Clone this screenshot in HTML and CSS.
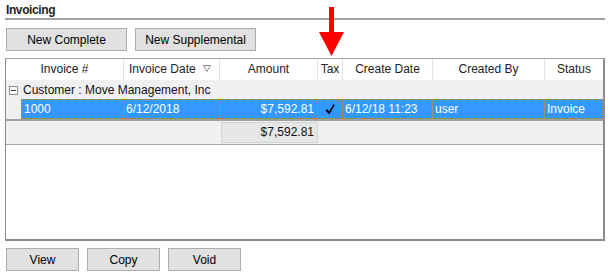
FILE: index.html
```html
<!DOCTYPE html>
<html lang="en">
<head>
    <meta charset="UTF-8">
    <title>Invoicing</title>
    <link rel="stylesheet" href="styles.css">
</head>
<body>
    <div class="panel">
        <div class="title">Invoicing</div>

        <div class="toolbar">
            <button class="btn wide">New Complete</button>
            <button class="btn wide">New Supplemental</button>
        </div>

        <div class="grid">
            <!-- column headers -->
            <div class="head">
                <div class="hcell h1">Invoice #</div>
                <div class="hcell h2 sortable">
                    <span>Invoice Date</span>
                    <svg class="sort-icon" width="8" height="7" viewBox="0 0 8 7">
                        <polygon points="0.5,0.5 7.5,0.5 4,6.5" fill="none" stroke="#8a8a8a" stroke-width="1"/>
                    </svg>
                </div>
                <div class="hcell h3">Amount</div>
                <div class="hcell h4">Tax</div>
                <div class="hcell h5">Create Date</div>
                <div class="hcell h6">Created By</div>
                <div class="hcell h7">Status</div>
            </div>

            <!-- group -->
            <div class="group-row">
                <span class="toggle"></span>
                <span>Customer : Move Management, Inc</span>
            </div>

            <div class="data-line">
                <div class="indent"></div>
                <div class="data-row selected">
                    <div class="dcell d1">1000</div>
                    <div class="dcell d2">6/12/2018</div>
                    <div class="dcell d3 num">$7,592.81</div>
                    <div class="dcell d4 center">
                        <svg width="10" height="11" viewBox="0 0 10 11">
                            <path d="M0.3 6.2 L2.4 5.2 L4 7.6 L8.6 0.3 L9.8 1.1 L4.3 10.6 Z" fill="#000"/>
                        </svg>
                    </div>
                    <div class="dcell d5">6/12/18 11:23</div>
                    <div class="dcell d6">user</div>
                    <div class="dcell d7">Invoice</div>
                </div>
            </div>

            <!-- totals -->
            <div class="summary">
                <div class="sum-cell">$7,592.81</div>
            </div>
        </div>

        <div class="toolbar bottom">
            <button class="btn small">View</button>
            <button class="btn small">Copy</button>
            <button class="btn small">Void</button>
        </div>

        <svg class="arrow" width="25" height="49" viewBox="0 0 25 49">
            <rect x="10" y="0" width="5" height="26" fill="#ff0000"/>
            <polygon points="0,25 25,25 12.5,49" fill="#ff0000"/>
        </svg>
    </div>
</body>
</html>
```

FILE: styles.css
```css
body {
    margin: 0;
    font-family: "Liberation Sans", Arial, sans-serif;
    font-size: 12px;
    color: #111;
    background-color: #fff;
}
.panel {
    position: relative;
    padding: 0 6px 0 5px;
    width: 600px;
}
.title {
    height: 15px;
    padding: 3px 0 0 1px;
    line-height: 15px;
    font-weight: bold;
    letter-spacing: -0.4px;
    color: #1e1e1e;
    border-bottom: 2px solid #a0a0a0;
}
.toolbar {
    display: flex;
    gap: 8px;
    margin-top: 8px;
    padding-left: 1px;
}
.toolbar.bottom {
    margin-top: 7px;
}
.btn {
    height: 23px;
    padding: 0;
    background-color: #e1e1e1;
    border: 1px solid #adadad;
    font-family: inherit;
    font-size: 12px;
    color: #000;
}
.btn.wide {
    width: 121px;
}
.btn.small {
    width: 73px;
}
.grid {
    margin-top: 7px;
    height: 180px;
    border-top: 1px solid #a0a0a0;
    border-left: 1px solid #8c8c8c;
    border-right: 2px solid #8a8a90;
    border-bottom: 2px solid #8a8a90;
    background-color: #fff;
}
.head {
    display: flex;
    height: 21px;
}
.hcell {
    box-sizing: border-box;
    line-height: 21px;
    text-align: center;
    color: #222;
    border-right: 1px solid #e3e3e3;
}
.h1 { width: 118px; }
.h2 { width: 96px; }
.h3 { width: 98px; }
.h4 { width: 25px; }
.h5 { width: 90px; }
.h6 { width: 112px; }
.h7 { width: 58px; border-right: none; }
.sortable {
    display: flex;
    align-items: center;
    justify-content: space-between;
    padding: 0 8px 0 5px;
    text-align: left;
}
.sort-icon {
    margin-top: -2px;
}
.group-row {
    display: flex;
    align-items: center;
    height: 19px;
    background-color: #f0f0f0;
}
.toggle {
    position: relative;
    box-sizing: border-box;
    width: 9px;
    height: 9px;
    margin: 1px 5px 0 3px;
    border: 1px solid #919191;
    background-color: #fff;
}
.toggle::after {
    content: "";
    position: absolute;
    left: 1px;
    top: 3px;
    width: 5px;
    height: 1px;
    background-color: #333;
}
.data-line {
    display: flex;
    background-color: #f0f0f0;
}
.indent {
    width: 15px;
}
.data-row {
    display: flex;
    box-sizing: border-box;
    width: 582px;
    height: 20px;
    border: 1px dotted #c98236;
}
.data-row.selected {
    background-color: #3399ff;
    color: #fff;
}
.dcell {
    box-sizing: border-box;
    padding: 0 2px 0 2px;
    line-height: 18px;
    white-space: nowrap;
    border-right: 1px solid #a58a6e;
}
.dcell.num {
    text-align: right;
    padding-right: 3px;
}
.dcell.center {
    display: flex;
    align-items: center;
    justify-content: center;
}
.d1 { width: 102px; }
.d2 { width: 96px; }
.d3 { width: 98px; }
.d4 { width: 25px; }
.d5 { width: 90px; }
.d6 { width: 112px; }
.d7 { width: 57px; border-right: none; }
.summary {
    height: 23px;
    border-top: 2px solid #a0a0a0;
    border-bottom: 1px solid #a8a8a8;
    background-color: #f0f0f0;
}
.sum-cell {
    box-sizing: border-box;
    width: 97px;
    height: 21px;
    margin: 1px 0 0 215px;
    padding-right: 3px;
    line-height: 19px;
    text-align: right;
    color: #111;
    background-color: #e5e7e7;
    border: 1px solid #d0d4d4;
}
.arrow {
    position: absolute;
    left: 319px;
    top: 7px;
}
```
